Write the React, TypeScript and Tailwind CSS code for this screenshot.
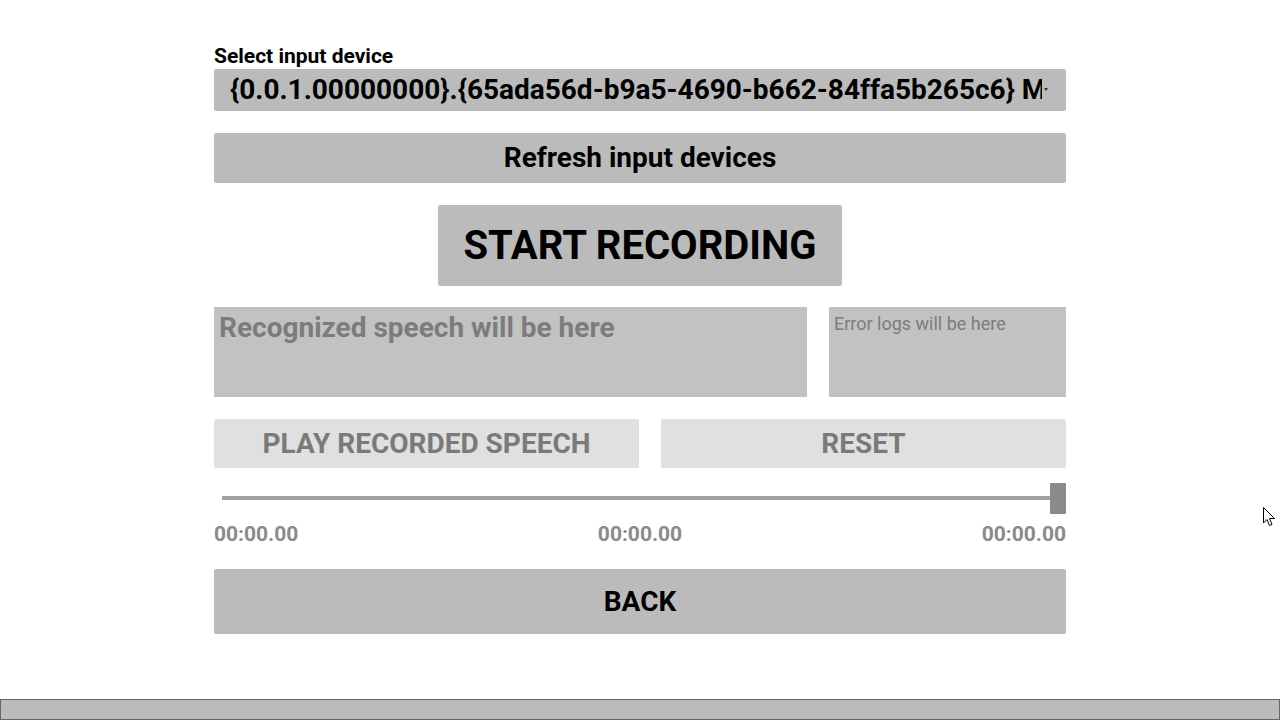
import React from 'react';

const font = { fontFamily: 'Roboto, "Noto Sans", sans-serif' };

const Btn: React.FC<{ className?: string; children: React.ReactNode; disabled?: boolean }> = ({
  className = '',
  children,
  disabled,
}) => (
  <button
    disabled={disabled}
    className={`flex items-center justify-center rounded-[2px] font-bold ${
      disabled ? 'bg-[#e0e0e0] text-[#7a7a7a]' : 'bg-[#bbbbbb] text-black'
    } ${className}`}
  >
    {children}
  </button>
);

export default function App() {
  return (
    <div className="relative flex h-screen w-full flex-col bg-white" style={font}>
      <div className="mx-auto flex w-[852px] flex-col pt-[44px]">
        <div className="text-[21px] font-bold leading-[24px] text-black">Select input device</div>

        <div className="relative mt-px flex h-[42px] items-center overflow-hidden rounded-[2px] bg-[#bbbbbb] pl-[16px] pr-[24px]">
          <span className="overflow-hidden whitespace-nowrap text-[28px] font-bold leading-none text-black">
            {'{0.0.1.00000000}.{65ada56d-b9a5-4690-b662-84ffa5b265c6} Microphone'}
          </span>
          <span className="absolute right-[18px] top-[19px] h-0 w-0 border-x-[2px] border-t-[3px] border-x-transparent border-t-[#333]" />
        </div>

        <Btn className="mt-[22px] h-[50px] w-full text-[28px]">Refresh input devices</Btn>

        <div className="mt-[22px] flex justify-center">
          <Btn className="h-[81px] w-[404px] text-[40px]">START RECORDING</Btn>
        </div>

        <div className="mt-[21px] flex h-[90px] gap-[22px]">
          <div className="w-[593px] bg-[#c2c2c2] px-[5px] pt-[4px] text-[28px] font-bold leading-[34px] text-[#7c7c7c]">
            Recognized speech will be here
          </div>
          <div className="flex-1 bg-[#c2c2c2] px-[5px] pt-[5px] text-[18px] leading-[24px] text-[#7c7c7c]">
            Error logs will be here
          </div>
        </div>

        <div className="mt-[22px] flex h-[49px] gap-[22px]">
          <Btn disabled className="h-full w-[425px] text-[28px]">PLAY RECORDED SPEECH</Btn>
          <Btn disabled className="h-full flex-1 text-[28px]">RESET</Btn>
        </div>

        <div className="relative mt-[15px] h-[31px]">
          <div className="absolute left-[8px] right-[8px] top-[13px] h-[4px] bg-[#a0a0a0]" />
          <div className="absolute right-0 top-0 h-[31px] w-[16px] rounded-[1px] bg-[#8a8a8a]" />
        </div>

        <div className="mt-[8px] flex justify-between text-[21px] font-bold leading-[24px] text-[#8a8a8a]">
          <span>00:00.00</span>
          <span>00:00.00</span>
          <span>00:00.00</span>
        </div>

        <Btn className="mt-[23px] h-[65px] w-full text-[28px]">BACK</Btn>
      </div>

      <div className="mt-auto h-[21px] w-full border border-[#666666] bg-[#bbbbbb]" />

      <svg className="absolute left-[1263px] top-[507px]" width="13" height="20" viewBox="0 0 13 20">
        <path d="M0.5 0.5 L0.5 16 L4 12.5 L6.5 18.5 L9 17.5 L6.5 11.5 L11.5 11.5 Z" fill="white" stroke="black" strokeWidth="1" />
      </svg>
    </div>
  );
}
